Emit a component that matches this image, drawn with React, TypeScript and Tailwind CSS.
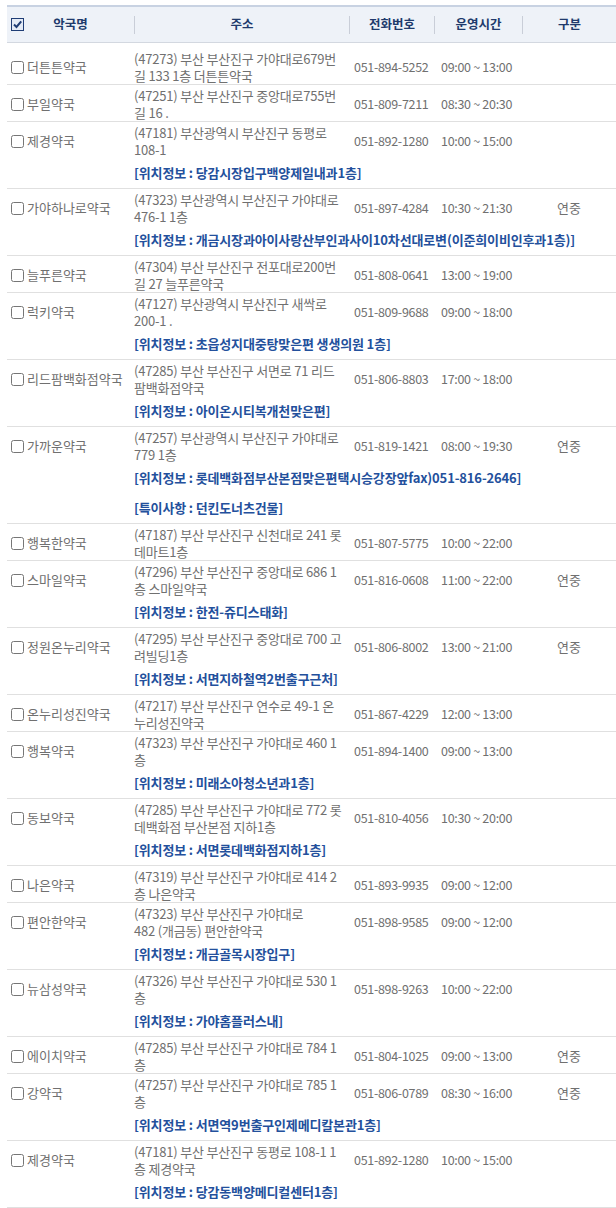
import React, { FC } from "react";

interface IPharmacy {
  name: string;
  addr: string[];
  tel: string;
  time: string;
  type?: string;
  info?: string[];
}

const pharmacies: IPharmacy[] = [
  { name: "더튼튼약국", addr: ["(47273) 부산 부산진구 가야대로679번", "길 133 1층 더튼튼약국"], tel: "051-894-5252", time: "09:00 ~ 13:00" },
  { name: "부일약국", addr: ["(47251) 부산 부산진구 중앙대로755번", "길 16 ."], tel: "051-809-7211", time: "08:30 ~ 20:30" },
  { name: "제경약국", addr: ["(47181) 부산광역시 부산진구 동평로", "108-1"], tel: "051-892-1280", time: "10:00 ~ 15:00", info: ["[위치정보 : 당감시장입구백양제일내과1층]"] },
  { name: "가야하나로약국", addr: ["(47323) 부산광역시 부산진구 가야대로", "476-1 1층"], tel: "051-897-4284", time: "10:30 ~ 21:30", type: "연중", info: ["[위치정보 : 개금시장과아이사랑산부인과사이10차선대로변(이준희이비인후과1층)]"] },
  { name: "늘푸른약국", addr: ["(47304) 부산 부산진구 전포대로200번", "길 27 늘푸른약국"], tel: "051-808-0641", time: "13:00 ~ 19:00" },
  { name: "럭키약국", addr: ["(47127) 부산광역시 부산진구 새싹로", "200-1 ."], tel: "051-809-9688", time: "09:00 ~ 18:00", info: ["[위치정보 : 초읍성지대중탕맞은편 생생의원 1층]"] },
  { name: "리드팜백화점약국", addr: ["(47285) 부산 부산진구 서면로 71 리드", "팜백화점약국"], tel: "051-806-8803", time: "17:00 ~ 18:00", info: ["[위치정보 : 아이온시티복개천맞은편]"] },
  { name: "가까운약국", addr: ["(47257) 부산광역시 부산진구 가야대로", "779 1층"], tel: "051-819-1421", time: "08:00 ~ 19:30", type: "연중", info: ["[위치정보 : 롯데백화점부산본점맞은편택시승강장앞fax)051-816-2646]", "[특이사항 : 던킨도너츠건물]"] },
  { name: "행복한약국", addr: ["(47187) 부산 부산진구 신천대로 241 롯", "데마트1층"], tel: "051-807-5775", time: "10:00 ~ 22:00" },
  { name: "스마일약국", addr: ["(47296) 부산 부산진구 중앙대로 686 1", "층 스마일약국"], tel: "051-816-0608", time: "11:00 ~ 22:00", type: "연중", info: ["[위치정보 : 한전-쥬디스태화]"] },
  { name: "정원온누리약국", addr: ["(47295) 부산 부산진구 중앙대로 700 고", "려빌딩1층"], tel: "051-806-8002", time: "13:00 ~ 21:00", type: "연중", info: ["[위치정보 : 서면지하철역2번출구근처]"] },
  { name: "온누리성진약국", addr: ["(47217) 부산 부산진구 연수로 49-1 온", "누리성진약국"], tel: "051-867-4229", time: "12:00 ~ 13:00" },
  { name: "행복약국", addr: ["(47323) 부산 부산진구 가야대로 460 1", "층"], tel: "051-894-1400", time: "09:00 ~ 13:00", info: ["[위치정보 : 미래소아청소년과1층]"] },
  { name: "동보약국", addr: ["(47285) 부산 부산진구 가야대로 772 롯", "데백화점 부산본점 지하1층"], tel: "051-810-4056", time: "10:30 ~ 20:00", info: ["[위치정보 : 서면롯데백화점지하1층]"] },
  { name: "나은약국", addr: ["(47319) 부산 부산진구 가야대로 414 2", "층 나은약국"], tel: "051-893-9935", time: "09:00 ~ 12:00" },
  { name: "편안한약국", addr: ["(47323) 부산 부산진구 가야대로", "482 (개금동) 편안한약국"], tel: "051-898-9585", time: "09:00 ~ 12:00", info: ["[위치정보 : 개금골목시장입구]"] },
  { name: "뉴삼성약국", addr: ["(47326) 부산 부산진구 가야대로 530 1", "층"], tel: "051-898-9263", time: "10:00 ~ 22:00", info: ["[위치정보 : 가야홈플러스내]"] },
  { name: "에이치약국", addr: ["(47285) 부산 부산진구 가야대로 784 1", "층"], tel: "051-804-1025", time: "09:00 ~ 13:00", type: "연중" },
  { name: "강약국", addr: ["(47257) 부산 부산진구 가야대로 785 1", "층"], tel: "051-806-0789", time: "08:30 ~ 16:00", type: "연중", info: ["[위치정보 : 서면역9번출구인제메디칼본관1층]"] },
  { name: "제경약국", addr: ["(47181) 부산 부산진구 동평로 108-1 1", "층 제경약국"], tel: "051-892-1280", time: "10:00 ~ 15:00", info: ["[위치정보 : 당감동백양메디컬센터1층]"] },
];

const HeaderCheck: FC = () => (
  <span className="ml-[4px] flex h-[13px] w-[13px] shrink-0 items-center justify-center border border-[#1f3d75] bg-[#e4ebf6]">
    <svg width="11" height="11" viewBox="0 0 11 11">
      <path d="M2 5.5 L4.5 8 L9.2 2.3" stroke="#1f3d75" strokeWidth="2" fill="none" />
    </svg>
  </span>
);

const Divider: FC = () => <span className="h-[18px] w-px bg-[#c9ced8]" />;

const PharmacyRow: FC<{ item: IPharmacy; first: boolean }> = ({ item, first }) => {
  return (
    <div className={`border-b border-[#e0e0e0] ${first ? "pt-[7px]" : "pt-[2px]"}`}>
      <div className="grid grid-cols-[127px_220px_87px_81px_1fr] items-center text-[#707070]">
        <label className="flex items-center">
          <input type="checkbox" className="m-0 ml-[4px] h-[13px] w-[13px]" />
          <span className="ml-[3px] text-[13px] whitespace-nowrap">{item.name}</span>
        </label>
        <div className="text-[13px] leading-[17px] tracking-[-0.2px]">
          {item.addr.map((line) => (
            <div key={line} className="whitespace-nowrap">
              {line}
            </div>
          ))}
        </div>
        <div className="text-[12.5px] tracking-[-0.3px] whitespace-nowrap">{item.tel}</div>
        <div className="text-[12.5px] tracking-[-0.3px] whitespace-nowrap">{item.time}</div>
        <div className="text-center text-[13px]">{item.type}</div>
      </div>
      {item.info && (
        <div className="flex flex-col gap-[13px] pb-[7px] pl-[127px] pt-[6px]">
          {item.info.map((line) => (
            <div key={line} className="whitespace-nowrap text-[13px] font-bold leading-[17px] tracking-[-0.15px] text-[#23509c]">
              {line}
            </div>
          ))}
        </div>
      )}
    </div>
  );
};

const App: FC = () => {
  return (
    <div className="min-h-[1208px] overflow-hidden bg-white pl-[7px] pt-[5px] font-['Noto_Sans_CJK_KR',sans-serif]">
      <div className="grid h-[38px] grid-cols-[127px_1px_214px_1px_84px_1px_87px_1px_1fr] items-center border-t-2 border-b border-t-[#c8d2e2] border-b-[#d3d8e0] bg-[#eef2f8] text-[12.5px] font-bold text-[#203a6c]">
        <div className="flex items-center">
          <HeaderCheck />
          <span className="flex-1 pr-[17px] text-center">악국명</span>
        </div>
        <Divider />
        <div className="text-center">주소</div>
        <Divider />
        <div className="text-center">전화번호</div>
        <Divider />
        <div className="text-center">운영시간</div>
        <Divider />
        <div className="text-center">구분</div>
      </div>
      {pharmacies.map((item, i) => (
        <PharmacyRow key={i} item={item} first={i === 0} />
      ))}
    </div>
  );
};

export default App;
